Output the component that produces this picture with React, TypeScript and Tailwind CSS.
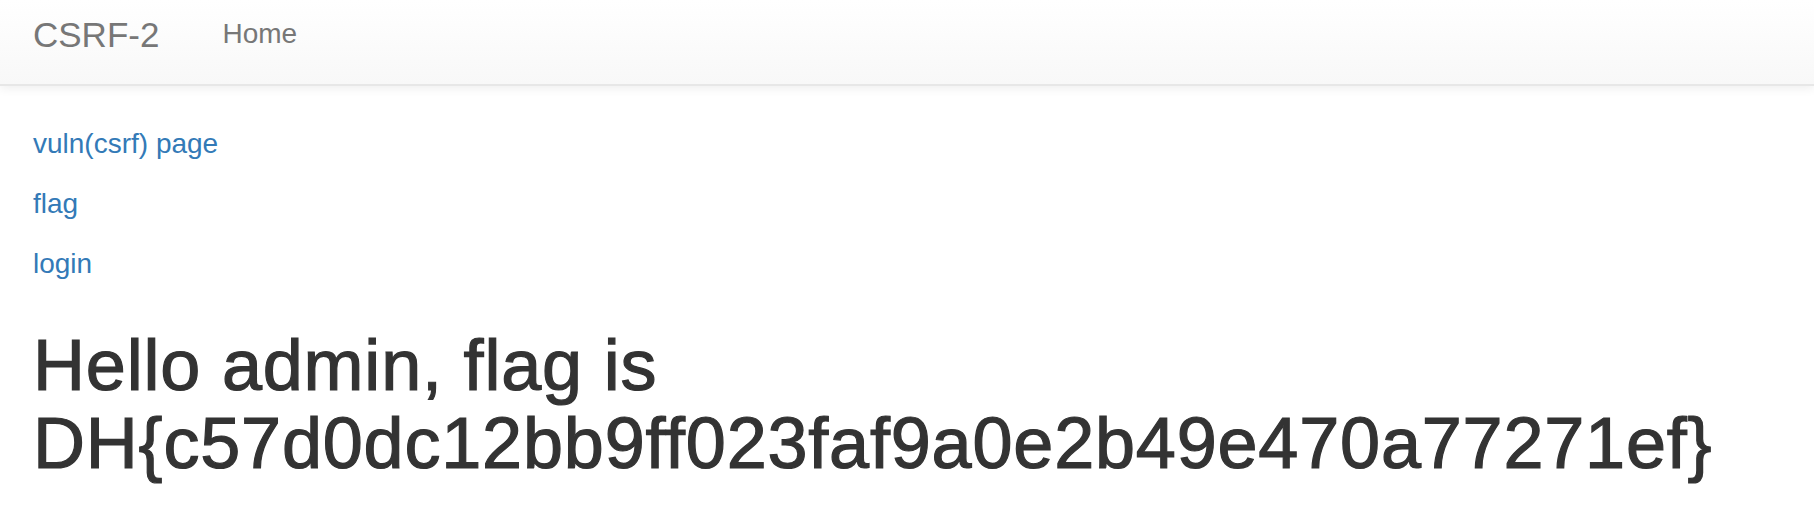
export default function App() {
  return (
    <div className="min-h-screen bg-white font-['Liberation_Sans',Arial,sans-serif]">
      <nav className="h-[86px] bg-gradient-to-b from-white to-[#f8f8f8] border-b-2 border-[#e7e7e7] shadow-[0_2px_10px_rgba(0,0,0,0.075)]">
        <div className="flex items-start pl-[33px]">
          <a href="#" className="pt-[15px] text-[35px] leading-[40px] text-[#777]">
            CSRF-2
          </a>
          <a href="#" className="ml-[63px] pt-[14px] text-[28px] leading-[40px] text-[#777]">
            Home
          </a>
        </div>
      </nav>
      <div className="px-[33px] pt-[38px]">
        <p className="mb-[20px] text-[28px] leading-[40px]">
          <a href="#" className="text-[#337ab7]">vuln(csrf) page</a>
        </p>
        <p className="mb-[20px] text-[28px] leading-[40px]">
          <a href="#" className="text-[#337ab7]">flag</a>
        </p>
        <p className="mb-[20px] text-[28px] leading-[40px]">
          <a href="#" className="text-[#337ab7]">login</a>
        </p>
        <h1 className="mt-[42px] text-[72px] leading-[78px] font-medium text-[#333] tracking-[0.8px] [-webkit-text-stroke:1.2px_#333]">
          Hello admin, flag is
          <br />
          DH{"{"}c57d0dc12bb9ff023faf9a0e2b49e470a77271ef{"}"}
        </h1>
      </div>
    </div>
  )
}
